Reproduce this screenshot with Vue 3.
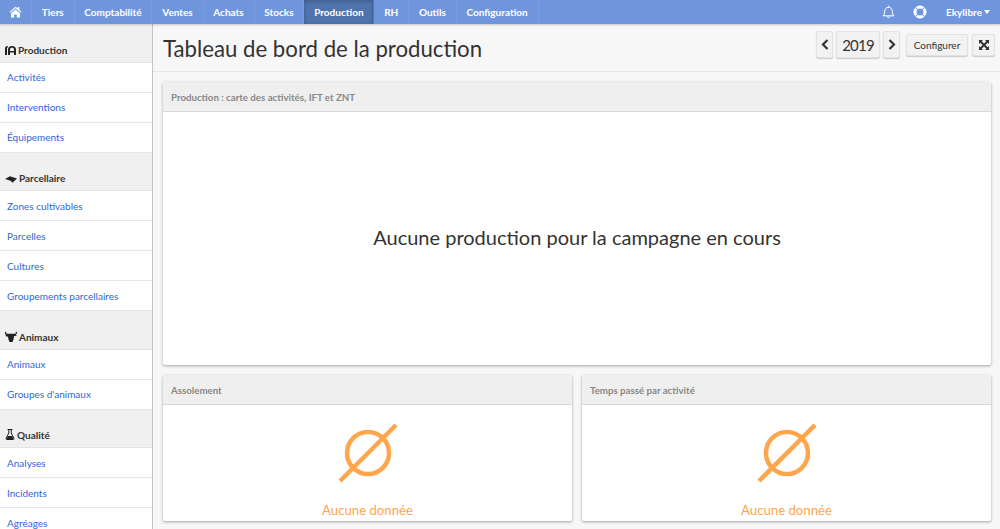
<script setup>
const navItems = ['Tiers', 'Comptabilité', 'Ventes', 'Achats', 'Stocks', 'Production', 'RH', 'Outils', 'Configuration']

const sections = [
  { title: 'Production', icon: 'production', items: ['Activités', 'Interventions', 'Équipements'] },
  { title: 'Parcellaire', icon: 'land', items: ['Zones cultivables', 'Parcelles', 'Cultures', 'Groupements parcellaires'] },
  { title: 'Animaux', icon: 'cow', items: ['Animaux', "Groupes d'animaux"] },
  { title: 'Qualité', icon: 'flask', items: ['Analyses', 'Incidents', 'Agréages'] },
]

const smallCells = ['Assolement', 'Temps passé par activité']
</script>

<template>
  <div class="page">
    <header class="topbar">
      <a class="nav-link nav-home">
        <svg width="13" height="12" viewBox="0 0 13 12"><path fill="#fff" d="M6.500 0.800 0.400 6l.7.8L6.500 2.300l5.400 4.500.7-.8-2.200-1.900V1H9v1.300zM2 7.200V11.600h3.200V8.400h2.600v3.200H11V7.200L6.500 3.400z" /></svg>
      </a>
      <a v-for="item in navItems" :key="item" class="nav-link" :class="{ active: item === 'Production' }">{{ item }}</a>
      <div class="topbar-right">
        <svg class="bell" width="13" height="14" viewBox="0 0 13 14"><path fill="none" stroke="#fff" stroke-width="1" d="M1 10.800c1.200-1 1.600-2 1.600-4.200C2.600 4 4.200 2.300 6.500 2.300S10.400 4 10.400 6.600c0 2.200.4 3.200 1.600 4.200zM6.500 2.300V.8M5 11.200c0 1.800 3 1.800 3 0" /></svg>
        <svg class="help" width="14" height="14" viewBox="0 0 14 14"><circle cx="7" cy="7" r="5" fill="none" stroke="#fff" stroke-width="3" /><path stroke="#8fb0e8" stroke-width="1.200" d="M2.500 2.500l2.200 2.200M11.500 2.500 9.300 4.700M2.500 11.500l2.200-2.200M11.500 11.500 9.300 9.300" /></svg>
        <span class="user">Ekylibre</span>
        <span class="caret"></span>
      </div>
    </header>

    <div class="body-row">
      <aside class="sidebar">
        <section v-for="section in sections" :key="section.title">
          <h3 class="side-title">
            <svg v-if="section.icon === 'production'" width="11" height="9" viewBox="0 0 11 9"><path fill="#222" d="M0 9V2.500C0 1 .8 0 2.800 0v1.500C2.200 1.500 2 1.900 2 2.500V9zM3 9V3.500C3 1.200 4.500 0 7 0s4 1.200 4 3.500V9H9V6.500H5V9zM5 5h4V3.500C9 2.300 8.200 1.700 7 1.700s-2 .6-2 1.800z" /></svg>
            <svg v-else-if="section.icon === 'land'" width="12" height="7" viewBox="0 0 12 7"><path fill="#222" d="M0 3 5 .2 12 2.400 7.500 6.800 5.500 4.800z" /></svg>
            <svg v-else-if="section.icon === 'cow'" width="12" height="11" viewBox="0 0 12 11"><path fill="#222" d="M0 .5 1.500 1.200 1 2.500 3 2.800h6l2-.3-.5-1.300L12 .5l-.2 2.200-1 .9 1 .8-1.800.6-1 .2L8.500 8.500 7.500 11h-3L3.500 8.500 3 5.800 2 5.600.2 5l1-.8-1-.9z" /></svg>
            <svg v-else width="10" height="11" viewBox="0 0 10 11"><path fill="none" stroke="#222" stroke-width="1" d="M2.500.5h5M3.800.5V4L1 9.500c-.2.500 0 1 .6 1h6.800c.6 0 .8-.5.600-1L6.200 4V.5" /><path fill="#222" d="M2.800 7h4.400L8.500 10h-7z" /></svg>
            {{ section.title }}
          </h3>
          <a v-for="item in section.items" :key="item" class="side-link">{{ item }}</a>
        </section>
      </aside>

      <main class="main">
        <div class="title-bar">
          <h1>Tableau de bord de la production</h1>
          <div class="toolbar">
            <button class="btn btn-arrow">
              <svg width="8" height="11" viewBox="0 0 8 11"><path fill="none" stroke="#333" stroke-width="2.200" d="M6.500 1 2 5.500 6.500 10" /></svg>
            </button>
            <button class="btn btn-year">2019</button>
            <button class="btn btn-arrow">
              <svg width="8" height="11" viewBox="0 0 8 11"><path fill="none" stroke="#333" stroke-width="2.200" d="M1.500 1 6 5.500 1.500 10" /></svg>
            </button>
            <button class="btn btn-config">Configurer</button>
            <button class="btn btn-expand">
              <svg width="10" height="10" viewBox="0 0 10 10"><path fill="#333" d="M0 0h4L0 4zM10 0v4L6 0zM0 10V6l4 4zM10 10H6l4-4z" /><path stroke="#333" stroke-width="2" d="M1.500 1.500l7 7M8.500 1.500l-7 7" /></svg>
            </button>
          </div>
        </div>

        <div class="cells">
          <div class="cell cell-large">
            <div class="cell-title">Production : carte des activités, IFT et ZNT</div>
            <div class="cell-body big-empty">Aucune production pour la campagne en cours</div>
          </div>
          <div class="cell-row">
            <div v-for="name in smallCells" :key="name" class="cell cell-small">
              <div class="cell-title">{{ name }}</div>
              <div class="cell-body no-data">
                <svg width="60" height="60" viewBox="0 0 60 60"><circle cx="30" cy="30" r="21" fill="none" stroke="#ffa64d" stroke-width="4.500" /><path stroke="#ffa64d" stroke-width="4.500" d="M2 58 58 2" /></svg>
                <span>Aucune donnée</span>
              </div>
            </div>
          </div>
        </div>
      </main>
    </div>
  </div>
</template>

<style>
html, body {
  margin: 0;
  height: 100%;
  overflow: hidden;
}
</style>

<style scoped>
.page {
  height: 529px;
  overflow: hidden;
  font-family: Lato, "Open Sans", sans-serif;
  background: #f7f7f7;
  color: #333;
}

.topbar {
  height: 24px;
  display: flex;
  background: #6f96dd;
  box-shadow: 0 1px 2px rgba(0, 0, 0, 0.2);
  position: relative;
}

.nav-link {
  display: flex;
  align-items: center;
  padding: 0 9.8px;
  font-size: 10px;
  font-weight: 700;
  color: #fff;
  border-right: 1px solid #799de0;
}

.nav-home {
  width: 32px;
  box-sizing: border-box;
  padding: 0 0 0 9px;
}

.nav-link.active {
  background: #4f74ad;
  border-right-color: #4f74ad;
  box-shadow: inset 0 1px 4px rgba(0, 0, 0, 0.25);
}

.topbar-right {
  margin-left: auto;
  display: flex;
  align-items: center;
  padding-right: 9px;
  color: #fff;
}

.bell {
  margin-right: 18px;
}

.help {
  margin-right: 19px;
}

.user {
  font-size: 10px;
  font-weight: 700;
}

.caret {
  margin-left: 2px;
  margin-right: 1px;
  border-left: 3.5px solid transparent;
  border-right: 3.5px solid transparent;
  border-top: 4px solid #fff;
}

.body-row {
  display: flex;
  height: 505px;
}

.sidebar {
  width: 153px;
  flex: none;
  box-sizing: border-box;
  background: #f0f0f0;
  border-right: 1px solid #c4c4c4;
}

.side-title {
  height: 38.5px;
  box-sizing: border-box;
  margin: 0;
  padding: 0 0 6px 5px;
  display: flex;
  align-items: flex-end;
  gap: 2px;
  font-size: 10px;
  line-height: 12px;
  font-weight: 700;
  color: #333;
  border-bottom: 1px solid #e3e3e3;
}

.side-title svg {
  flex: none;
  margin-bottom: 1px;
}

.side-link {
  display: flex;
  align-items: center;
  height: 30px;
  box-sizing: border-box;
  padding-left: 7px;
  font-size: 10px;
  color: #2f66d8;
  background: #fff;
  border-bottom: 1px solid #e8e8e8;
}

.main {
  flex: 1;
  min-width: 0;
}

.title-bar {
  height: 48px;
  box-sizing: border-box;
  display: flex;
  align-items: center;
  justify-content: space-between;
  padding: 0 5px 0 10px;
  border-bottom: 1px solid #e6e6e6;
}

h1 {
  margin: 1px 0 0;
  font-size: 22.2px;
  font-weight: 400;
  color: #333;
}

.toolbar {
  display: flex;
  align-items: center;
  gap: 3px;
  margin-bottom: 6px;
}

.btn {
  font-family: inherit;
  padding: 0;
  display: flex;
  align-items: center;
  justify-content: center;
  color: #333;
  background: #f2f2f2;
  border: 1px solid #e2e2e2;
  border-radius: 2px;
  box-shadow: 0 1px 1px rgba(0, 0, 0, 0.18);
}

.btn-arrow {
  width: 17px;
  height: 27px;
}

.btn-year {
  width: 44px;
  height: 27px;
  font-size: 15px;
  letter-spacing: -0.8px;
}

.btn-config {
  width: 62px;
  height: 22px;
  margin: 0 1px 0 3px;
  font-size: 10px;
}

.btn-expand {
  width: 23px;
  height: 22px;
}

.cells {
  padding: 10px 9px 0 10px;
  display: flex;
  flex-direction: column;
  gap: 10px;
}

.cell {
  display: flex;
  flex-direction: column;
  background: #fff;
  border-radius: 2px;
  box-shadow: 0 1px 3px rgba(0, 0, 0, 0.35);
}

.cell-large {
  height: 283px;
}

.cell-row {
  display: flex;
  gap: 10px;
}

.cell-small {
  flex: 1;
  height: 146px;
}

.cell-title {
  height: 30px;
  flex: none;
  box-sizing: border-box;
  padding-left: 8px;
  display: flex;
  align-items: center;
  font-size: 9.7px;
  font-weight: 700;
  color: #888;
  background: #efefef;
  border-bottom: 1px solid #d8d8d8;
}

.cell-body {
  flex: 1;
  display: flex;
}

.big-empty {
  align-items: center;
  justify-content: center;
  padding-bottom: 4px;
  box-sizing: border-box;
  font-size: 20px;
  color: #333;
}

.no-data {
  flex-direction: column;
  align-items: center;
  padding-top: 18px;
  box-sizing: border-box;
  color: #ffa64d;
  font-size: 13.2px;
}

.no-data span {
  margin-top: 19px;
}
</style>
